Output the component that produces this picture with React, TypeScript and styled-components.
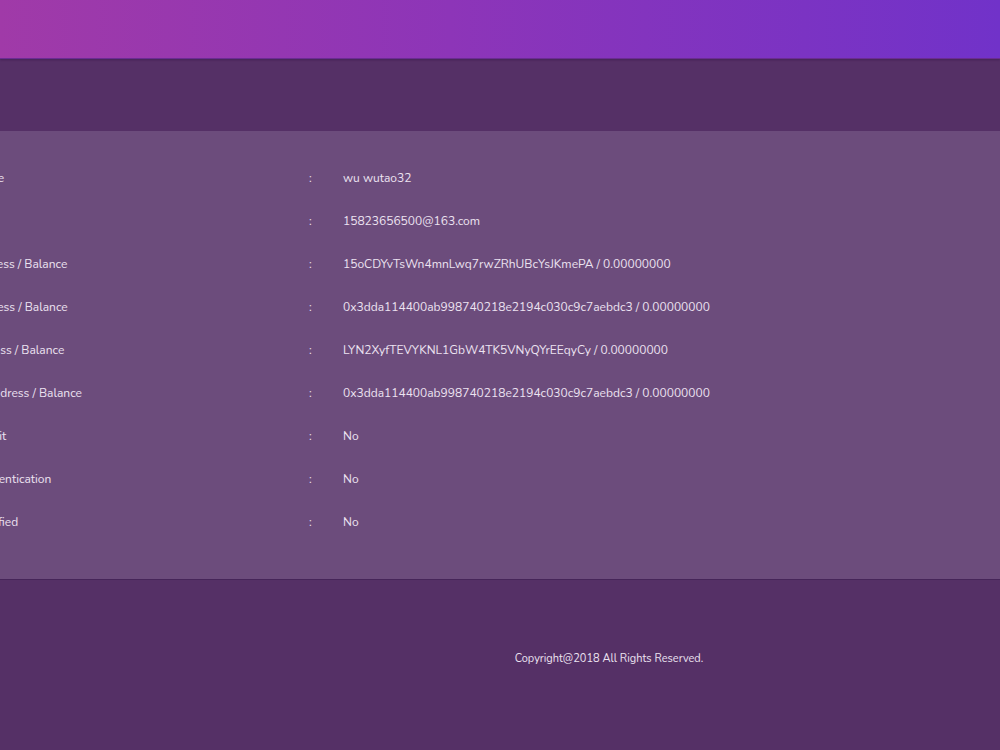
import React from "react";
import styled, { createGlobalStyle } from "styled-components";

const Global = createGlobalStyle`
  html, body { margin: 0; padding: 0; }
  body {
    background: #553066;
    font-family: "Nunito", Lato, "Open Sans", sans-serif;
    overflow: hidden;
    width: 1000px;
    height: 750px;
  }
`;

const Page = styled.div`
  display: flex;
  flex-direction: column;
  min-height: 750px;
  background: #553066;
`;

const Header = styled.header`
  height: 58px;
  background: linear-gradient(90deg, #a03aa8 0%, #8d35b8 45%, #7132c9 100%);
  border-bottom: 1px solid #6a2c92;
  box-shadow: 0 1px 2px rgba(40, 10, 60, 0.35);
`;

const Band = styled.div`
  height: 72px;
`;

const Panel = styled.section`
  background: #6c4c7c;
  padding: 25px 0 36px;
  box-shadow: 0 1px 0 rgba(60, 30, 80, 0.6);
`;

const Row = styled.div`
  display: grid;
  grid-template-columns: 364px 35px 1fr;
  height: 43px;
  align-items: center;
  margin-left: -56px;
  font-size: 12px;
  color: #ece3f1;
  white-space: nowrap;
`;

const Label = styled.span``;
const Colon = styled.span`
  padding-left: 1px;
`;
const Value = styled.span``;

const Footer = styled.footer`
  padding: 72px 0 0 218px;
  text-align: center;
  font-size: 11px;
  color: #ece3f1;
`;

const rows: [string, string][] = [
  ["User Name", "wu wutao32"],
  ["Email", "15823656500@163.com"],
  ["BTC Address / Balance", "15oCDYvTsWn4mnLwq7rwZRhUBcYsJKmePA / 0.00000000"],
  ["ETH Address / Balance", "0x3dda114400ab998740218e2194c030c9c7aebdc3 / 0.00000000"],
  ["LTC Address / Balance", "LYN2XyfTEVYKNL1GbW4TK5VNyQYrEEqyCy / 0.00000000"],
  ["ERC20 Address / Balance", "0x3dda114400ab998740218e2194c030c9c7aebdc3 / 0.00000000"],
  ["Credit Limit", "No"],
  ["SMS Authentication", "No"],
  ["Email Verified", "No"],
];

export default function App() {
  return (
    <Page>
      <Global />
      <Header />
      <Band />
      <Panel>
        {rows.map(([l, v]) => (
          <Row key={l}>
            <Label>{l}</Label>
            <Colon>:</Colon>
            <Value>{v}</Value>
          </Row>
        ))}
      </Panel>
      <Footer>Copyright@2018 All Rights Reserved.</Footer>
    </Page>
  );
}
